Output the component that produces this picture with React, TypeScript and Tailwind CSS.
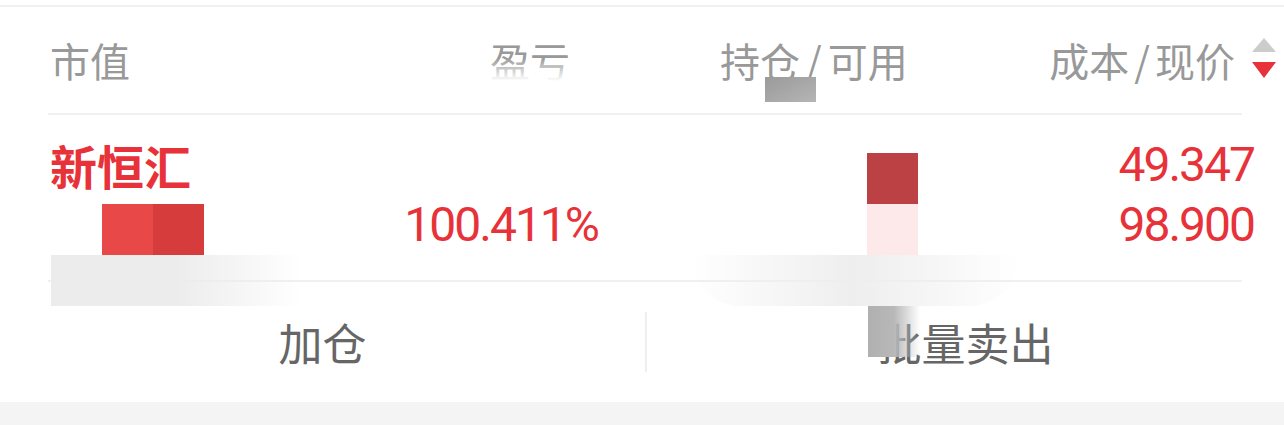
import React from 'react';

const cjk = { fontFamily: '"Noto Sans CJK SC", "Noto Sans", sans-serif' };
const num = { fontFamily: 'Roboto, "Liberation Sans", sans-serif' };

function SortArrows() {
    return (
        <svg width="26" height="44" viewBox="0 0 26 44" className="ml-[16px]">
            <path d="M13 0 L25 14 L1 14 Z" fill="#cccccc" />
            <path d="M1 24 L25 24 L13 40 Z" fill="#e8323a" />
        </svg>
    );
}

export default function App() {
    return (
        <div className="relative w-[1284px] h-[425px] bg-white overflow-hidden">
            <div className="h-[5px]" />
            <div className="border-t-2 border-[#f0f0f0]" />

            {/* header */}
            <div className="ml-[48px] mr-[42px] h-[108px] flex items-center text-[40px] text-[#999999] border-b-2 border-[#f0f0f0]" style={cjk}>
                <div className="w-[300px] pl-[2px]">市值</div>
                <div className="w-[300px] flex justify-end pr-[78px]">盈亏</div>
                <div className="w-[300px] pl-[72px]">持仓<span className="mx-[6px]">/</span>可用</div>
                <div className="flex-1 flex items-center justify-end -mr-[35px]">
                    成本<span className="mx-[5px]">/</span>现价
                    <SortArrows />
                </div>
            </div>

            {/* position row */}
            <div className="ml-[48px] mr-[42px] pt-[20px] pb-[25px] flex text-[#e8323a] border-b-2 border-[#f0f0f0]">
                <div className="w-[300px] pl-[2px]">
                    <div className="h-[60px] flex items-center text-[47px] font-bold" style={cjk}>新恒汇</div>
                    <div className="h-[60px]" />
                </div>
                <div className="w-[300px] flex flex-col items-end pr-[50px] text-[48px] tracking-[-2px]" style={num}>
                    <div className="h-[60px] leading-[60px]" />
                    <div className="h-[60px] leading-[60px]">100.411%</div>
                </div>
                <div className="w-[300px]" />
                <div className="flex-1 flex flex-col items-end -mr-[12px] text-[48px] tracking-[-2px]" style={num}>
                    <div className="h-[60px] leading-[60px]">49.347</div>
                    <div className="h-[60px] leading-[60px]">98.900</div>
                </div>
            </div>

            {/* actions */}
            <div className="h-[120px] flex items-center text-[44px] text-[#666666]" style={cjk}>
                <div className="w-[645px] flex justify-center">加仓</div>
                <div className="w-[2px] h-[60px] bg-[#eeeeee]" />
                <div className="flex-1 flex justify-center">批量卖出</div>
            </div>
            <div className="h-[23px] bg-[#f4f4f4]" />

            {/* redaction blocks over the content */}
            <div className="absolute left-[470px] top-[58px] w-[120px] h-[46px] bg-gradient-to-b from-white/0 via-white to-white" />
            <div className="absolute left-[765px] top-[77px] w-[51px] h-[25px] bg-gradient-to-br from-[#9a9a9a] to-[#b5b5b5]" />
            <div className="absolute left-[102px] top-[204px] w-[51px] h-[51px] bg-[#e84848]" />
            <div className="absolute left-[153px] top-[204px] w-[51px] h-[51px] bg-[#d63c3c]" />
            <div className="absolute left-[51px] top-[255px] w-[250px] h-[51px] bg-gradient-to-r from-[#ececec] via-[#ececec] to-white/0" />
            <div className="absolute left-[867px] top-[153px] w-[51px] h-[51px] bg-[#bb4144]" />
            <div className="absolute left-[867px] top-[204px] w-[51px] h-[51px] bg-[#fde8ea]" />
            <div className="absolute left-[690px] top-[255px] w-[330px] h-[51px] rounded-b-[60px] bg-gradient-to-r from-white/0 via-[#eeeeee] to-white/0" />
            <div className="absolute left-[868px] top-[306px] w-[52px] h-[51px] bg-gradient-to-r from-[#b0b0b0] via-[#b8b8b8] to-white/0" />
        </div>
    );
}
